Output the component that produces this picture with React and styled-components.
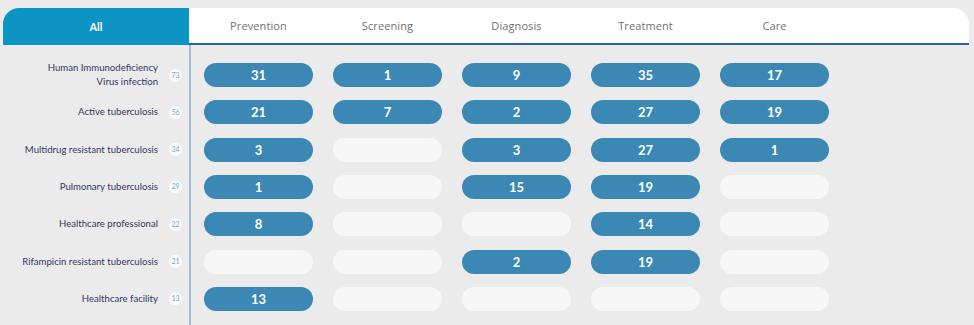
import React from 'react';
import styled, { createGlobalStyle } from 'styled-components';

const GlobalStyle = createGlobalStyle`
  html, body {
    margin: 0;
    background: #ebebeb;
  }
`;

const columns = ['Prevention', 'Screening', 'Diagnosis', 'Treatment', 'Care'];

const rows = [
  { label: ['Human Immunodeficiency', 'Virus infection'], count: 73, values: [31, 1, 9, 35, 17] },
  { label: ['Active tuberculosis'], count: 56, values: [21, 7, 2, 27, 19] },
  { label: ['Multidrug resistant tuberculosis'], count: 34, values: [3, null, 3, 27, 1] },
  { label: ['Pulmonary tuberculosis'], count: 29, values: [1, null, 15, 19, null] },
  { label: ['Healthcare professional'], count: 22, values: [8, null, null, 14, null] },
  { label: ['Rifampicin resistant tuberculosis'], count: 21, values: [null, null, 2, 19, null] },
  { label: ['Healthcare facility'], count: 13, values: [13, null, null, null, null] },
];

const Page = styled.div`
  padding: 8px 5px 0 3px;
  height: 325px;
  box-sizing: border-box;
  overflow: hidden;
  display: flex;
  flex-direction: column;
`;

const Header = styled.div`
  display: flex;
  height: 37px;
`;

const AllTab = styled.div`
  width: 186px;
  flex: none;
  background: #0d93c4;
  border-top-left-radius: 16px;
  color: #fff;
  font-family: Lato, 'Liberation Sans', sans-serif;
  font-weight: 700;
  font-size: 11px;
  display: flex;
  align-items: center;
  justify-content: center;
`;

const TabBar = styled.div`
  flex: 1;
  background: #fff;
  border-top-right-radius: 16px;
  border-bottom: 2px solid #2c61a7;
  display: flex;
  align-items: center;
  padding-left: 15px;
  gap: 20px;
`;

const TabLabel = styled.div`
  width: 109px;
  text-align: center;
  font-family: 'Open Sans', 'Liberation Sans', sans-serif;
  font-size: 11px;
  color: #707070;
  letter-spacing: 0.1px;
`;

const Body = styled.div`
  flex: 1;
  display: flex;
`;

const LabelColumn = styled.div`
  width: 186px;
  flex: none;
  padding-top: 18px;
  display: flex;
  flex-direction: column;
  gap: 13.33px;
`;

const LabelRow = styled.div`
  height: 24px;
  display: flex;
  align-items: center;
  justify-content: flex-end;
  padding-right: 7px;
  gap: 11px;
`;

const LabelText = styled.div`
  font-family: Lato, 'Liberation Sans', sans-serif;
  font-size: 9.6px;
  line-height: 14px;
  color: #36366a;
  text-align: right;
`;

const CountBadge = styled.div`
  width: 13px;
  height: 13px;
  border-radius: 50%;
  background: #fbfbfb;
  color: #6fa9d6;
  font-family: Lato, 'Liberation Sans', sans-serif;
  font-size: 7px;
  line-height: 1;
  display: flex;
  align-items: center;
  justify-content: center;
`;

const Grid = styled.div`
  flex: 1;
  border-left: 2px solid #a3bfd9;
  padding: 18px 0 0 13px;
  display: grid;
  grid-template-columns: repeat(5, 109px);
  grid-auto-rows: 24px;
  column-gap: 20px;
  row-gap: 13.33px;
  align-content: start;
`;

const Pill = styled.div`
  border-radius: 12px;
  background: ${props => (props.empty ? '#f7f7f7' : '#3b88b5')};
  color: #fff;
  font-family: Lato, 'Liberation Sans', sans-serif;
  font-weight: 700;
  font-size: 13px;
  display: flex;
  align-items: center;
  justify-content: center;
`;

const App = () => (
  <Page>
    <GlobalStyle />
    <Header>
      <AllTab>All</AllTab>
      <TabBar>
        {columns.map(c => (
          <TabLabel key={c}>{c}</TabLabel>
        ))}
      </TabBar>
    </Header>
    <Body>
      <LabelColumn>
        {rows.map(r => (
          <LabelRow key={r.label.join()}>
            <LabelText>
              {r.label.map(l => (
                <div key={l}>{l}</div>
              ))}
            </LabelText>
            <CountBadge>{r.count}</CountBadge>
          </LabelRow>
        ))}
      </LabelColumn>
      <Grid>
        {rows.map(r =>
          r.values.map((v, i) => (
            <Pill key={r.label.join() + i} empty={v === null}>
              {v}
            </Pill>
          ))
        )}
      </Grid>
    </Body>
  </Page>
);

export default App;
